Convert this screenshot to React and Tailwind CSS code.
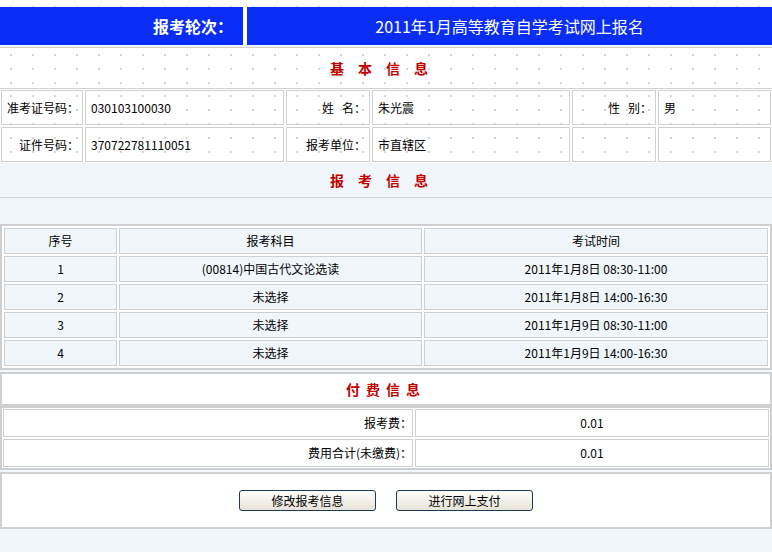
const F = { fontFamily: '"SimSun","Noto Sans CJK SC",sans-serif' };
const dots = "bg-white bg-[radial-gradient(#d4d4d4_1px,transparent_1.2px)] bg-[length:22px_14px]";

function Cell({ className = "", children }) {
  return <div className={"border border-[#cfcfcf] flex items-center text-[12px] text-black " + className}>{children}</div>;
}

export default function App() {
  const exams = [
    ["1", "(00814)中国古代文论选读", "2011年1月8日 08:30-11:00"],
    ["2", "未选择", "2011年1月8日 14:00-16:30"],
    ["3", "未选择", "2011年1月9日 08:30-11:00"],
    ["4", "未选择", "2011年1月9日 14:00-16:30"],
  ];
  return (
    <div className="w-[772px] h-[552px] bg-[#f0f6fa] overflow-hidden" style={F}>
      <div className={"h-[7px] " + dots} />
      <div className="flex h-[38px] bg-white gap-[4px]">
        <div className="w-[243px] bg-[#0a2df5] flex items-center justify-end pr-[10px] text-white text-[16px] font-bold">报考轮次：</div>
        <div className="flex-1 bg-[#0a2df5] flex items-center justify-center text-white text-[16px]">2011年1月高等教育自学考试网上报名</div>
      </div>
      <div className={"h-[42px] mt-[2px] border-y border-[#cfcfcf] flex items-center justify-center text-[#c00000] font-bold text-[14px] tracking-[14px] " + dots}>基本信息</div>
      <div className={"grid grid-cols-[82px_199px_84px_198px_84px_1fr] gap-[2px] p-[1px] " + dots}>
        <Cell className="h-[35px] justify-end pr-[3px]">准考证号码：</Cell>
        <Cell className="pl-[5px]">030103100030</Cell>
        <Cell className="justify-end pr-[3px]">姓&nbsp;&nbsp;&nbsp;名：</Cell>
        <Cell className="pl-[5px]">朱光震</Cell>
        <Cell className="justify-end pr-[3px]">性&nbsp;&nbsp;&nbsp;别：</Cell>
        <Cell className="pl-[5px]">男</Cell>
        <Cell className="h-[35px] justify-end pr-[3px]">证件号码：</Cell>
        <Cell className="pl-[5px]">370722781110051</Cell>
        <Cell className="justify-end pr-[3px]">报考单位：</Cell>
        <Cell className="pl-[5px]">市直辖区</Cell>
        <Cell></Cell>
        <Cell></Cell>
      </div>
      <div className="h-[35px] border-b border-[#cfcfcf] flex items-center justify-center text-[#c00000] font-bold text-[14px] tracking-[14px]">报考信息</div>
      <div className="h-[28px] border-b-2 border-[#cfcfcf]" />
      <div className="border-x-2 border-b-2 border-[#cfcfcf] p-[2px] bg-white">
        <div className="grid grid-cols-[113px_303px_1fr] gap-[2px]">
          {[["序号", "报考科目", "考试时间"], ...exams].map((r, i) =>
            r.map((c, j) => (
              <Cell key={i + "-" + j} className="h-[26px] bg-[#f0f6fa] justify-center">{c}</Cell>
            ))
          )}
        </div>
      </div>
      <div className="h-[34px] mt-[2px] bg-white border-2 border-[#cfcfcf] flex items-center justify-center text-[#c00000] font-bold text-[14px] tracking-[6px]">付费信息</div>
      <div className="border-2 border-[#cfcfcf] p-[1px] bg-white grid grid-cols-[410px_1fr] gap-[2px]">
        <Cell className="h-[28px] justify-end">报考费：</Cell>
        <Cell className="justify-center">0.01</Cell>
        <Cell className="h-[28px] justify-end">费用合计(未缴费)：</Cell>
        <Cell className="justify-center">0.01</Cell>
      </div>
      <div className="h-[57px] mt-[2px] bg-white border-2 border-[#cfcfcf] flex items-center justify-center gap-[20px]">
        <button className="w-[137px] h-[21px] rounded-[3px] border border-[#1c3a5a] bg-gradient-to-b from-white to-[#e6e2d6] text-[12px]" style={F}>修改报考信息</button>
        <button className="w-[137px] h-[21px] rounded-[3px] border border-[#1c3a5a] bg-gradient-to-b from-white to-[#e6e2d6] text-[12px]" style={F}>进行网上支付</button>
      </div>
    </div>
  );
}
